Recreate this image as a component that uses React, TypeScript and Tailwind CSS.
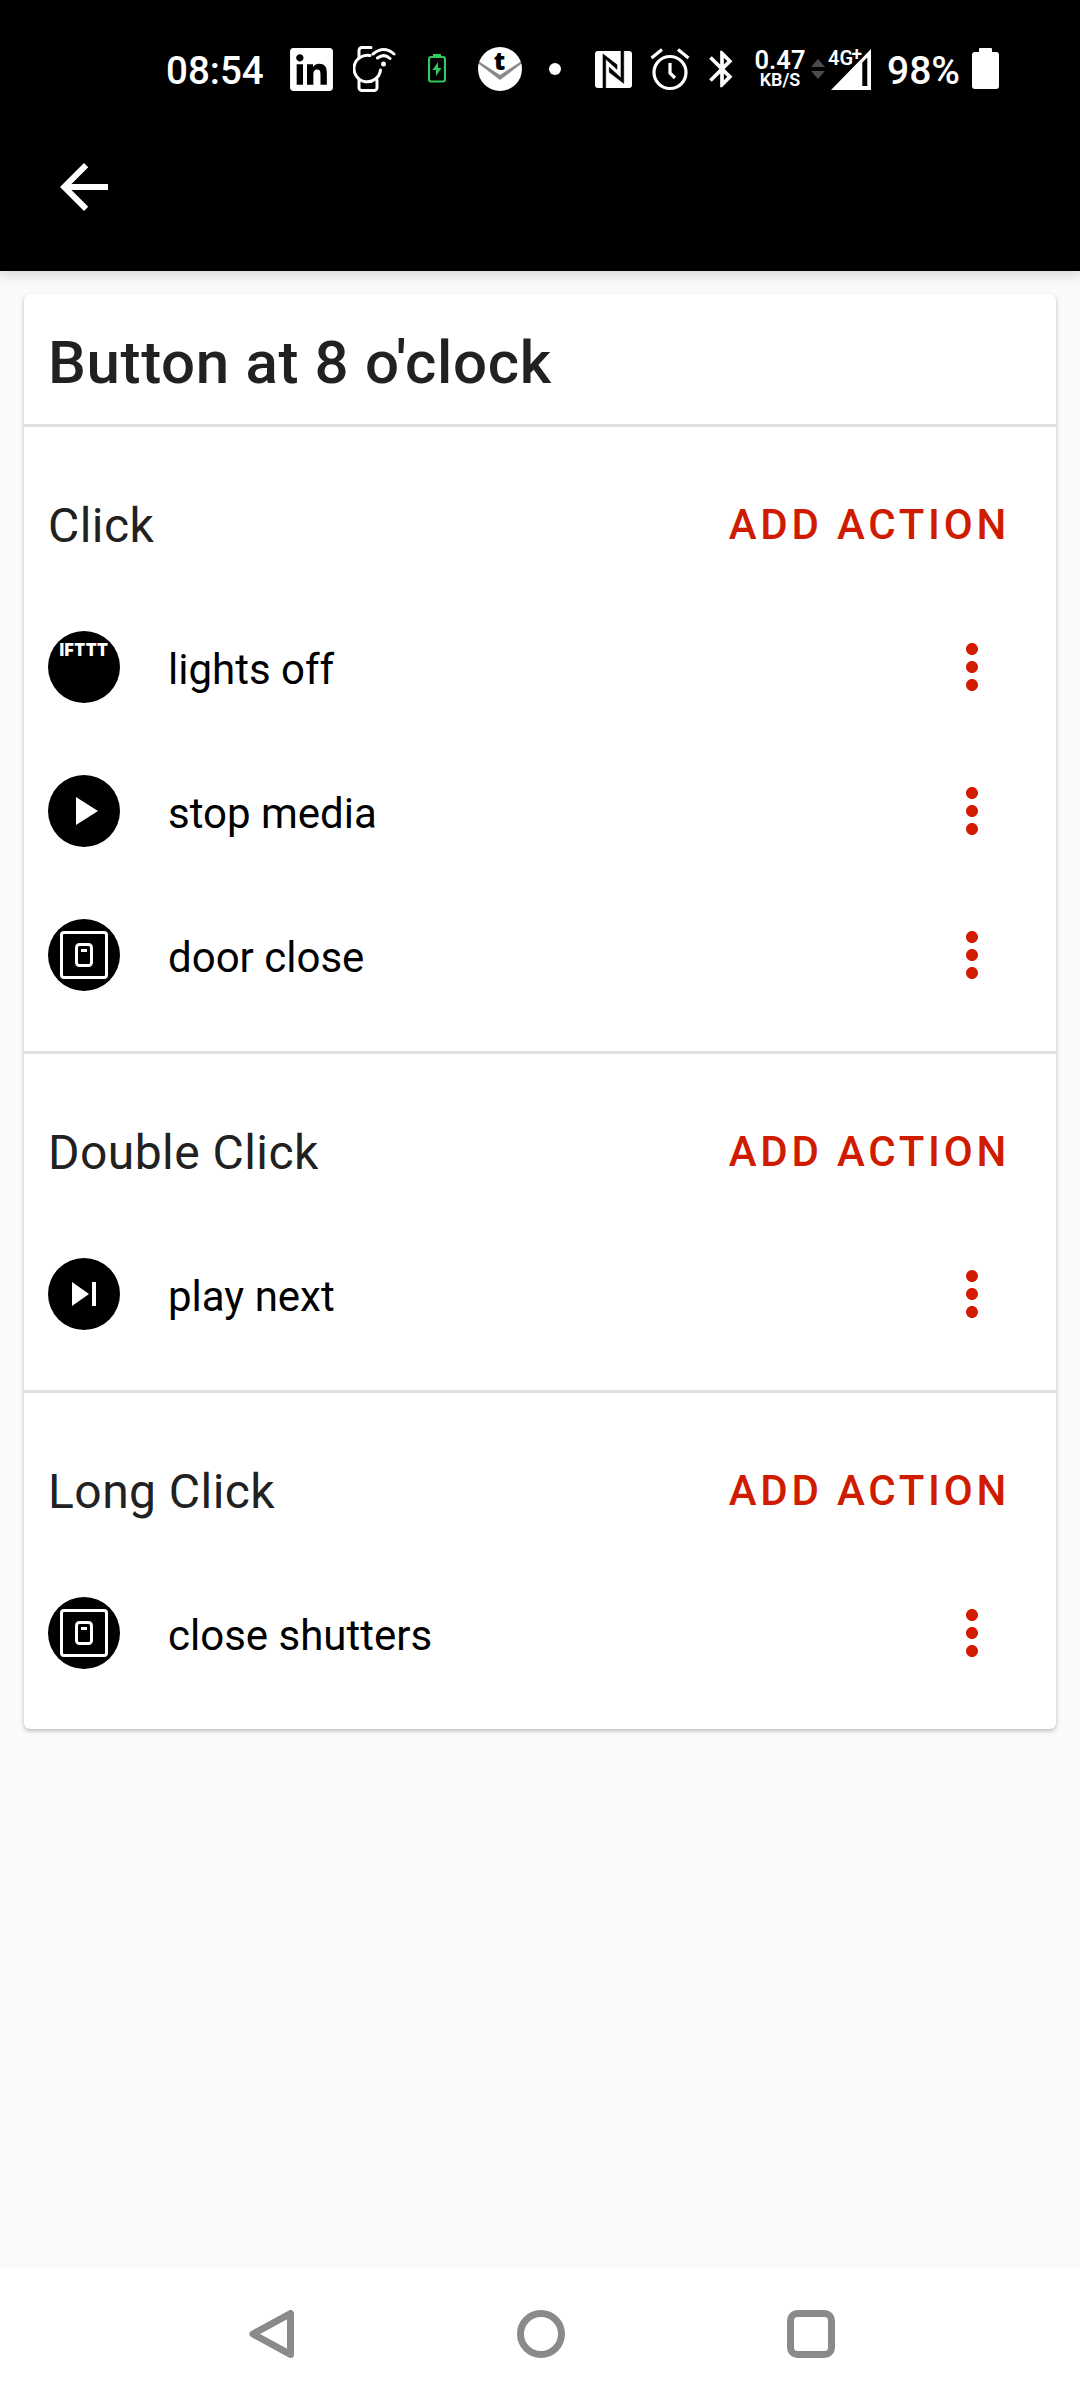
import { FaLinkedin } from "react-icons/fa";
import { MdArrowBack, MdBluetooth, MdMoreVert, MdPlayArrow, MdSkipNext } from "react-icons/md";

const sections = [
    {
        title: "Click",
        actions: [
            { icon: "ifttt", label: "lights off" },
            { icon: "play", label: "stop media" },
            { icon: "switch", label: "door close" },
        ],
    },
    { title: "Double Click", actions: [{ icon: "next", label: "play next" }] },
    { title: "Long Click", actions: [{ icon: "switch", label: "close shutters" }] },
];

const StatusBar = () => {
    return (
        <div className="flex h-[138px] items-center pl-[166px] font-medium">
            <span className="w-[124px] pt-[5px] text-[38.5px] leading-none">08:54</span>
            <FaLinkedin className="h-[49px] w-[43px]" />
            {/* smart watch */}
            <svg className="ml-5 h-12 w-11" viewBox="0 0 44 48" fill="none" stroke="white" strokeWidth="3" strokeLinecap="round">
                <path d="M18 2.500H9a3 3 0 0 0-3 3V13" />
                <path d="M17 10.500A13.300 13.300 0 1 0 27.500 25" />
                <path d="M6 35v7.500a3 3 0 0 0 3 3h12a3 3 0 0 0 3-3V35" />
                <path d="M20 9Q31 0 41 9M24.500 13Q31 8 37 13.500" />
                <circle cx="30.500" cy="19" r="2.500" fill="white" stroke="none" />
            </svg>
            <svg className="ml-[31px] h-12 w-[18px]" viewBox="0 0 18 48" fill="#34c759">
                <path d="M5 9h8v3H5z" />
                <rect x="1" y="12" width="16" height="24.500" rx="2" fill="none" stroke="#34c759" strokeWidth="2.200" />
                <path d="M10 17 4.500 25H8v6l5.500-8H10z" />
            </svg>
            <svg className="ml-8 h-12 w-11 overflow-visible" viewBox="0 0 44 48">
                <circle cx="22" cy="24" r="22" fill="white" />
                <path d="M1 16.500 22 30l21-13.500v2.500L22 35 1 19z" fill="#8a8a8a" />
                <text x="21.500" y="25" textAnchor="middle" fontFamily="Open Sans" fontWeight="800" fontSize="25">t</text>
            </svg>
            <span className="ml-[27px] size-3 rounded-full bg-white" />
            <svg className="ml-[34px] h-12 w-[37px]" viewBox="0 0 37 48">
                <rect y="6" width="37" height="37" rx="3" fill="white" />
                <path d="M8 9 22 19.700v4.600L10.700 14v29H8zM28.700 38.300 14.300 27.300v-5L26 33V6h2.700z" fill="black" stroke="black" strokeWidth="0.6" />
            </svg>
            <svg className="ml-[18px] h-12 w-10" viewBox="0 0 40 48" fill="none" stroke="white" strokeWidth="3.200">
                <circle cx="20" cy="27.500" r="16" />
                <path d="M20 18v10l5 5M1.500 13 12 4.500M28 4.500 38.500 13" />
            </svg>
            <MdBluetooth className="ml-[10px] size-11" />
            <div className="ml-[10px] flex w-[52px] flex-col items-center font-semibold">
                <span className="text-[25.5px] leading-[22px]">0.47</span>
                <span className="text-[18px] leading-[18px]">KB/S</span>
            </div>
            <svg className="ml-[5px] h-12 w-[14px]" viewBox="0 0 14 48" fill="#4b4b4b">
                <path d="M0 22 7 14l7 8zM0 26h14l-7 8z" />
            </svg>
            <svg className="ml-[3px] h-12 w-[46px] overflow-visible" viewBox="0 0 46 48" fontFamily="Roboto" fontWeight="600">
                <path d="M3 45 43 4V45z" fill="white" />
                <path d="M34.300 17.500 39.300 12.500V41h-5z" fill="black" />
                <text x="0" y="20" fill="white" fontSize="20">4G</text>
                <text x="23.500" y="14.500" fill="white" stroke="black" strokeWidth="1.500" paintOrder="stroke" fontSize="19">+</text>
            </svg>
            <span className="ml-[13px] w-[85px] pt-[5px] text-[39px] leading-none">98%</span>
            <svg className="h-12 w-[27px]" viewBox="0 0 27 48" fill="white">
                <rect x="7" y="3" width="13" height="8" rx="1" />
                <rect y="7" width="27" height="37" rx="3" />
            </svg>
        </div>
    );
};

const ActionIcon = ({ name }: { name: string }) => {
    return (
        <div className="flex size-[72px] items-center justify-center rounded-full bg-black text-white">
            {name === "ifttt" && (
                <svg className="size-[72px]" viewBox="0 0 72 72">
                    <text x="11.500" y="25" textLength="49" lengthAdjust="spacingAndGlyphs" fill="white" fontFamily="Inter" fontWeight="900" fontSize="17.500" letterSpacing="0.5">IFTTT</text>
                </svg>
            )}
            {name === "play" && <MdPlayArrow className="size-12" />}
            {name === "next" && <MdSkipNext className="size-12" />}
            {name === "switch" && (
                <svg className="size-12" viewBox="0 0 48 48" fill="none" stroke="white" strokeWidth="3">
                    <rect x="1.500" y="1.500" width="45" height="45" rx="2.500" />
                    <rect x="16.500" y="13.500" width="15" height="21" rx="3" />
                    <path d="M21 19.500h6" />
                </svg>
            )}
        </div>
    );
};

const NavBar = () => {
    return (
        <div className="flex h-[132px] items-center justify-between bg-white pr-[245px] pl-[247px]">
            <svg className="size-12" viewBox="0 0 48 48" fill="none" stroke="#8a8a8a" strokeWidth="7" strokeLinejoin="round">
                <path d="M6 24 43.500 3.500v41z" />
            </svg>
            <svg className="size-12" viewBox="0 0 48 48" fill="none" stroke="#8a8a8a" strokeWidth="7">
                <circle cx="24" cy="24" r="20.500" />
            </svg>
            <svg className="size-12" viewBox="0 0 48 48" fill="none" stroke="#8a8a8a" strokeWidth="7">
                <rect x="3.500" y="3.500" width="41" height="41" rx="7" />
            </svg>
        </div>
    );
};

const App = () => {
    return (
        <div className="flex h-[2400px] w-[1080px] flex-col bg-[#fafafa] font-['Roboto',sans-serif]">
            <header className="h-[271px] bg-black text-white shadow-[0_4px_12px_rgba(0,0,0,0.15)]">
                <StatusBar />
                <button className="mt-[13px] ml-12 block">
                    <MdArrowBack className="size-[72px]" />
                </button>
            </header>

            <main className="grow px-6 pt-[23px]">
                <div className="rounded-md bg-white shadow-[0_2px_4px_rgba(0,0,0,0.25)]">
                    <h1 className="flex h-[130px] items-center px-6 pt-[7px] text-[60px] font-medium tracking-[0.65px] text-[#212121]">
                        Button at 8 o'clock
                    </h1>
                    {sections.map((section) => (
                        <section key={section.title} className="border-t-3 border-[#e0e0e0] pb-6">
                            <div className="flex h-[168px] items-center justify-between pt-[30px] pr-[46px] pl-6">
                                <h2 className="text-[48px] tracking-[0.45px] text-[#212121]">{section.title}</h2>
                                <button className="pb-[3px] text-[42px] font-medium tracking-[3.75px] text-[#cf1b00]">ADD ACTION</button>
                            </div>
                            {section.actions.map((action) => (
                                <div key={action.label} className="flex h-36 items-center pr-12 pl-6">
                                    <ActionIcon name={action.icon} />
                                    <span className="ml-12 grow pt-1 text-[42px] text-black">{action.label}</span>
                                    <MdMoreVert className="size-[72px] text-[#d41b00]" />
                                </div>
                            ))}
                        </section>
                    ))}
                </div>
            </main>

            <NavBar />
        </div>
    );
};

export default App;
